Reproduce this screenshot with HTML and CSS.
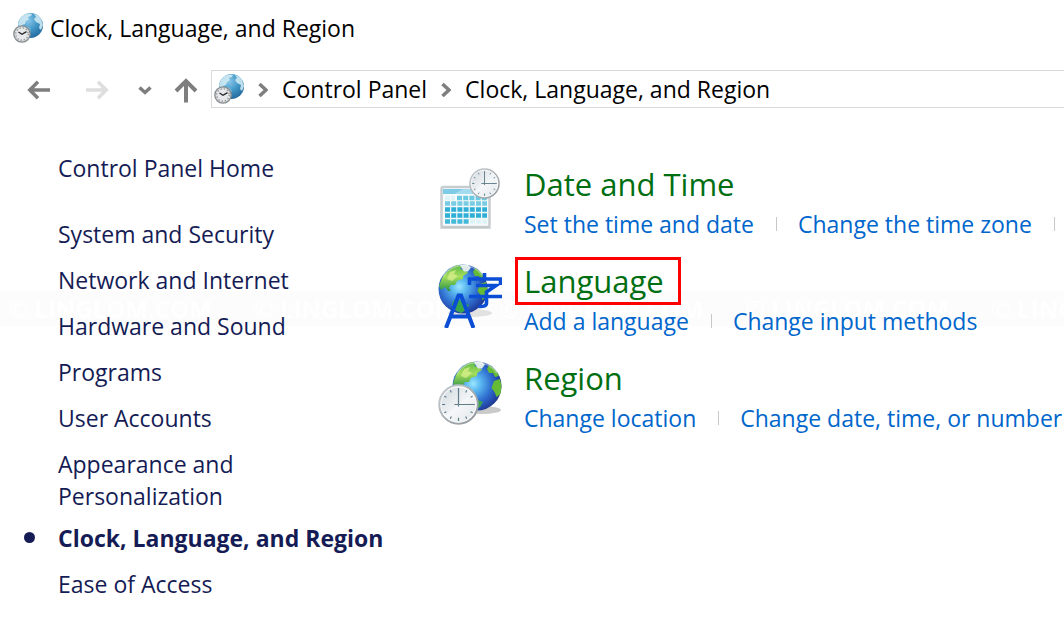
FILE: index.html
```
<!DOCTYPE html>
<html lang="en">
<head>
<meta charset="utf-8">
<meta name="viewport" content="width=device-width, initial-scale=1">
<title>Clock, Language, and Region</title>
<link rel="stylesheet" href="styles.css">
</head>
<body>
<svg class="defs" width="0" height="0" aria-hidden="true">
  <defs>
    <radialGradient id="paleSea" cx="0.4" cy="0.3" r="0.75">
      <stop offset="0" stop-color="#8cc8e8"/><stop offset="0.5" stop-color="#4297c8"/><stop offset="1" stop-color="#23679a"/>
    </radialGradient>
    <radialGradient id="sea" cx="0.42" cy="0.45" r="0.62">
      <stop offset="0" stop-color="#9be6ff"/><stop offset="0.25" stop-color="#5bb8f0"/><stop offset="0.6" stop-color="#2f6fd0"/><stop offset="0.85" stop-color="#2346a8"/><stop offset="1" stop-color="#1c3180"/>
    </radialGradient>
    <linearGradient id="face" x1="0" y1="0" x2="1" y2="1">
      <stop offset="0" stop-color="#cfd6dc"/><stop offset="0.5" stop-color="#f0f3f5"/><stop offset="1" stop-color="#d3d9de"/>
    </linearGradient>
    <linearGradient id="rim" x1="0" y1="0" x2="1" y2="1">
      <stop offset="0" stop-color="#c8cdd1"/><stop offset="1" stop-color="#8d949a"/>
    </linearGradient>
    <linearGradient id="land" x1="0" y1="0" x2="0" y2="1">
      <stop offset="0" stop-color="#5fb848"/><stop offset="0.45" stop-color="#a6de5c"/><stop offset="1" stop-color="#2c9444"/>
    </linearGradient>
    <symbol id="category" viewBox="0 0 30 30">
      <circle cx="17.5" cy="12.5" r="12.5" fill="url(#paleSea)"/>
      <path d="M7 6Q10 1 16 .5L19 1l-1 2-3 1 1 2-3 2-1 3-3 1-1 3-2-1-1-3zM21 1q5 1 7 5l2 6-2 5-2-2 1-4-4-2-2-3 2-2zM10 2l3 0-1 3-2 0z" fill="#d5edf5" fill-opacity=".85"/>
      <path d="M13 13l3 1 2 3-2 3-2-1z" fill="#76b8d8"/>
      <circle cx="9" cy="21" r="8.2" fill="#d9dcde" stroke="#858c90" stroke-width="1.3"/>
      <circle cx="9" cy="21" r="6.2" fill="#e6e8e9" stroke="#8d9296" stroke-width="1.4" stroke-dasharray="1.200 2.050"/>
      <path d="M5.500 19l3.500 2.200 4.500-2.600" fill="none" stroke="#242728" stroke-width="1.3"/>
    </symbol>
    <symbol id="globe" viewBox="0 0 50 50">
      <circle cx="25" cy="25" r="24.5" fill="url(#sea)"/>
      <path d="M4 14Q9 5 19 1l6 1-3 3 5 1 3 3-5 3 0 3-6 2-2 4-4 0-2 3 2 3-3 0-3-4-4 3-2-4z" fill="url(#land)"/>
      <path d="M15 37l5-2 6 4 5 2-3 5-5 3-6-3-3-5z" fill="#38a64d"/>
      <path d="M37 4q7 4 10 11l-4 1-2-4-4 0-2-4zM42 20l6-2 1.5 7-1 8-4 3-2-5-3-4z" fill="#65ba36"/>
      <path d="M22 1l7-.4 4 3-3 4-4 0-2-3z" fill="#deebe9"/>
      <path d="M12 8l6-2-2 4 4 2-6 5-5-2z" fill="#d9ef8c" fill-opacity=".75"/>
      <path d="M5 12A24 24 0 0 1 45 12" fill="none" stroke="#fff" stroke-opacity=".35" stroke-width="2"/>
    </symbol>
    <symbol id="clock" viewBox="0 0 40 40">
      <circle cx="20" cy="20" r="18.7" fill="url(#face)" stroke="url(#rim)" stroke-width="2"/>
      <circle cx="20" cy="20" r="17.2" fill="none" stroke="#fff" stroke-opacity=".8"/>
      <path d="M7 31Q18 21 34 9A17 17 0 0 1 25 36Q14 38 7 31z" fill="#fff" fill-opacity=".35"/>
      <path d="M20 4v3M20 33v3M4 20h3M33 20h3M28 6.2l-1 2M12 6.2l1 2M6.2 12l2 1M33.8 12l-2 1M6.2 28l2-1M33.8 28l-2-1M12 33.8l1-2M28 33.8l-1-2" stroke="#587988" stroke-width="1.1"/>
      <path d="M20 5v17M16 20h18" stroke="#607d89" stroke-width="1.2"/>
    </symbol>
  </defs>
</svg>

<header class="titlebar">
  <svg class="small-icon" aria-hidden="true"><use href="#category"/></svg>
  <h1 class="title">Clock, Language, and Region</h1>
</header>

<div class="toolbar">
  <div class="nav-buttons">
    <button class="nav-button" type="button" aria-label="Back"><svg width="24" height="24" viewBox="0 0 24 24"><path d="M23 13H3M11 4.8L2.8 13l8.2 8.2"/></svg></button>
    <button class="nav-button" type="button" aria-label="Forward" disabled><svg width="24" height="24" viewBox="0 0 24 24"><path d="M1 13h20M13 4.8l8.2 8.2-8.2 8.2"/></svg></button>
    <button class="nav-button recent" type="button" aria-label="Recent locations"><svg width="14" height="24" viewBox="0 0 14 24"><path d="M1.5 10.500L7 15.500l5.500-5"/></svg></button>
    <button class="nav-button" type="button" aria-label="Up"><svg width="24" height="28" viewBox="0 0 24 28"><path class="up" d="M12 27.500V6M2 16L12 6l10 10"/></svg></button>
  </div>
  <nav class="address" aria-label="Address">
    <svg class="small-icon" aria-hidden="true"><use href="#category"/></svg>
    <svg class="crumb-arrow" viewBox="0 0 10 16" aria-hidden="true"><path d="M1.500 3L8 9l-6.500 6"/></svg>
    <a class="crumb" href="#">Control Panel</a>
    <svg class="crumb-arrow" viewBox="0 0 10 16" aria-hidden="true"><path d="M1.500 3L8 9l-6.500 6"/></svg>
    <a class="crumb" href="#">Clock, Language, and Region</a>
  </nav>
</div>

<div class="body">
  <nav class="sidebar" aria-label="Categories">
    <a class="home" href="#">Control Panel Home</a>
    <ul class="categories">
      <li><a href="#">System and Security</a></li>
      <li><a href="#">Network and Internet</a></li>
      <li><a href="#">Hardware and Sound</a></li>
      <li><a href="#">Programs</a></li>
      <li><a href="#">User Accounts</a></li>
      <li class="two-line"><a href="#">Appearance and<br>Personalization</a></li>
      <li class="current"><a href="#" aria-current="page">Clock, Language, and Region</a></li>
      <li><a href="#">Ease of Access</a></li>
    </ul>
  </nav>

  <main class="content">
    <section class="group">
      <svg class="group-icon" viewBox="0 0 64 64" aria-hidden="true">
        <rect x="3.500" y="20" width="48" height="40" rx="2" fill="#f7fafa" stroke="#c8cdcf" stroke-width="2.500"/>
        <path d="M5 22h45v5H5z" fill="#a4dcef"/>
        <path d="M5 22h20l-9 5H5z" fill="#7ecbe7"/>
        <g fill="none" stroke-width="4.500">
          <path d="M19 31h30" stroke="#6cc9e1" stroke-dasharray="5 1.200"/>
          <path d="M7 36.500h42" stroke="#78cce3" stroke-dasharray="5 1.200"/>
          <path d="M7 42.500h42M7 48.500h42" stroke="#2eafd5" stroke-dasharray="5 1.200"/>
          <path d="M7 54.500h24" stroke="#43b9da" stroke-dasharray="5 1.200"/>
          <path d="M7 31h10M32 54.500h17" stroke="#def3f8" stroke-dasharray="5 1.200"/>
        </g>
        <path d="M2 61h51" stroke="#b7bdbf"/>
        <use href="#clock" x="31" y="1" width="31" height="31"/>
      </svg>
      <div class="group-text">
        <h2><a href="#">Date and Time</a></h2>
        <ul class="tasks">
          <li><a href="#">Set the time and date</a></li>
          <li class="more"><a href="#">Change the time zone</a></li>
        </ul>
      </div>
    </section>

    <section class="group">
      <svg class="group-icon" viewBox="0 0 64 64" aria-hidden="true">
        <ellipse cx="32" cy="49" rx="22" ry="4" fill="#777" fill-opacity=".2"/>
        <use href="#globe" x="0" y="0" width="50" height="50"/>
        <path d="M8 64L20.500 31.500h2.500L35.500 64M13 52.500h17.500" fill="none" stroke="#0b4ed5" stroke-width="4"/>
        <path d="M31.500 21v-6h31v6M46.500 9v6M38 21.500h20L48.500 28v11q0 4-8 3.500M31 32.500h33" fill="none" stroke="#0b4ed5" stroke-width="3.600"/>
      </svg>
      <div class="group-text">
        <h2 class="highlight"><a href="#">Language</a></h2>
        <ul class="tasks">
          <li><a href="#">Add a language</a></li>
          <li><a href="#">Change input methods</a></li>
        </ul>
      </div>
    </section>

    <section class="group">
      <svg class="group-icon" viewBox="0 0 64 64" aria-hidden="true">
        <ellipse cx="44" cy="49" rx="19" ry="4" fill="#666" fill-opacity=".35"/>
        <use href="#globe" x="14" y="0" width="50" height="50"/>
        <use href="#clock" x="0" y="23" width="41" height="41"/>
      </svg>
      <div class="group-text">
        <h2><a href="#">Region</a></h2>
        <ul class="tasks">
          <li><a href="#">Change location</a></li>
          <li><a href="#">Change date, time, or number</a></li>
        </ul>
      </div>
    </section>
  </main>
</div>

<div class="watermark" aria-hidden="true">
  <span>© LINGLOM.COM</span><span>© LINGLOM.COM</span><span>© LINGLOM.COM</span><span>© LINGLOM.COM</span><span>© LINGLOM.COM</span>
</div>
</body>
</html>
```
FILE: styles.css
```
* {
  box-sizing: border-box;
}

body {
  margin: 0;
  position: relative;
  isolation: isolate;
  min-height: 100vh;
  overflow-x: hidden;
  background: #fff;
  color: #000;
  font-family: "Open Sans", "Noto Sans", sans-serif;
  font-size: 23px;
  line-height: 32px;
}

a {
  color: inherit;
  text-decoration: none;
}

ul {
  margin: 0;
  padding: 0;
  list-style: none;
}

.defs {
  position: absolute;
}

.small-icon {
  flex: none;
  width: 30px;
  height: 30px;
}

.titlebar {
  display: flex;
  align-items: center;
  gap: 7px;
  padding: 12px 13px;
}

.title {
  margin: 0;
  font-size: 23px;
  font-weight: 400;
}

.toolbar {
  display: flex;
  align-items: center;
  margin-top: 14px;
}

.nav-buttons {
  display: flex;
  flex: none;
  align-items: center;
  padding: 0 13px 0 27px;
}

.nav-button {
  display: flex;
  margin: 0 34px 0 0;
  padding: 0;
  border: 0;
  background: none;
  color: #7e7e7e;
}

.nav-button:disabled {
  color: #dedede;
}

.nav-button:nth-child(2) {
  margin-right: 29px;
}

.nav-button.recent {
  margin-right: 22px;
}

.nav-button:last-child {
  margin-right: 0;
}

.nav-button path {
  fill: none;
  stroke: currentColor;
  stroke-width: 3.5;
}

.nav-button .up {
  stroke-width: 4;
}

.address {
  display: flex;
  flex: 1;
  align-items: center;
  height: 38px;
  padding-left: 2px;
  border: 1px solid #d9d9d9;
  border-right: 0;
  white-space: nowrap;
}

.crumb-arrow {
  flex: none;
  width: 10px;
  height: 16px;
  margin: 0 14px;
}

.crumb-arrow path {
  fill: none;
  stroke: #7e7e7e;
  stroke-width: 3.5;
}

.body {
  display: flex;
  padding-top: 44px;
}

.sidebar {
  flex: none;
  width: 438px;
  padding-left: 58px;
  color: #151c55;
}

.home {
  display: block;
  margin-bottom: 34px;
}

.categories li {
  margin-bottom: 14px;
}

.categories .two-line {
  margin-bottom: 10px;
}

.categories .current {
  position: relative;
  font-weight: 700;
}

.current::before {
  content: "";
  position: absolute;
  left: -34px;
  top: 10px;
  width: 11px;
  height: 11px;
  border-radius: 50%;
  background: #151c55;
}

.content {
  display: flex;
  flex: 1;
  flex-direction: column;
  gap: 20px;
  min-width: 0;
  padding-top: 11px;
}

.group {
  display: flex;
  gap: 22px;
}

.group-icon {
  flex: none;
  width: 64px;
  height: 64px;
  margin-top: 4px;
}

.group-text {
  min-width: 0;
}

.group h2 {
  width: max-content;
  margin: 0 0 3px -6px;
  padding: 0 14px 0 6px;
  color: #006f12;
  font-size: 31px;
  font-weight: 400;
  line-height: 42px;
}

.group .highlight {
  outline: 3px solid #ff0000;
}

.tasks {
  display: flex;
  color: #0066cc;
  white-space: nowrap;
}

.tasks li {
  display: flex;
  align-items: center;
}

.tasks li + li::before,
.tasks .more::after {
  content: "";
  width: 1px;
  height: 14px;
  margin: 0 21px 0 22px;
  background: #c8c8c8;
}

.watermark {
  position: absolute;
  z-index: -1;
  top: 291px;
  left: 0;
  right: 0;
  display: flex;
  gap: 42px;
  padding-left: 8px;
  overflow: hidden;
  background: #fcfcfc;
  color: #fff;
  font-size: 24px;
  font-weight: 700;
  line-height: 35px;
  white-space: nowrap;
  pointer-events: none;
}
```
